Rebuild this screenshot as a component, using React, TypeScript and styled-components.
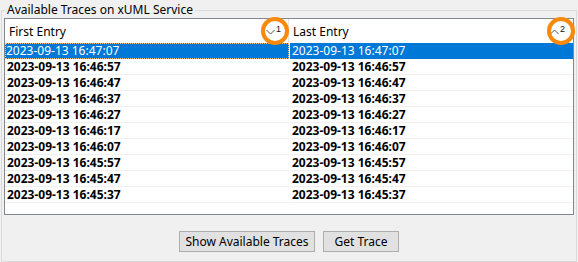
import React from "react";
import styled, { createGlobalStyle } from "styled-components";

const Global = createGlobalStyle`
  html, body { margin: 0; padding: 0; background: #f0f0f0; }
  body { font-family: "Noto Sans", "Liberation Sans", sans-serif; font-size: 12px; color: #000; }
  * { box-sizing: border-box; }
`;

const Page = styled.div`
  width: 578px;
  height: 262px;
  padding: 0 1px 0 1px;
`;

const Group = styled.fieldset`
  margin: 3px 0 0 0;
  height: 259px;
  width: 576px;
  border: 1px solid #dcdcdc;
  padding: 0 2px 0 2px;
  display: flex;
  flex-direction: column;
`;

const Legend = styled.legend`
  padding: 0 2px;
  margin-left: 1px;
  font-size: 12px;
  line-height: 14px;
  color: #000;
`;

const Table = styled.div`
  margin-top: 1px;
  width: 570px;
  height: 197px;
  border: 1px solid #828790;
  background: #fff;
  display: flex;
  flex-direction: column;
`;

const Grid = styled.div`
  display: grid;
  grid-template-columns: 284px 284px;
`;

const HeaderCell = styled.div<{ $last?: boolean }>`
  position: relative;
  height: 24px;
  display: flex;
  align-items: center;
  padding-left: 4px;
  border-right: ${(p) => (p.$last ? "none" : "1px solid #e5e5e5")};
  font-size: 12px;
`;

const SortMark = styled.div<{ $right: number }>`
  position: absolute;
  right: ${(p) => p.$right}px;
  top: 6px;
  display: flex;
  align-items: flex-start;
  gap: 1px;
  z-index: 1;
`;

const SortNum = styled.span`
  font-family: "Liberation Sans", sans-serif;
  font-size: 9px;
  line-height: 9px;
  color: #111;
`;

const Ring = styled.div<{ $right: number }>`
  position: absolute;
  right: ${(p) => p.$right}px;
  top: -2px;
  width: 28px;
  height: 28px;
  border-radius: 50%;
  border: 4px solid #f7890c;
  z-index: 2;
`;

const Cell = styled.div<{ $sel?: boolean; $focus?: boolean; $last?: boolean }>`
  height: 16px;
  line-height: 15px;
  padding-left: ${(p) => (p.$focus ? "1px" : "2px")};
  font-size: 12px;
  margin-left: ${(p) => (p.$last ? "1px" : "0")};
  background: ${(p) => (p.$sel ? "#0078d7" : "#fff")};
  color: ${(p) => (p.$sel ? "#fff" : "#000")};
  font-weight: ${(p) => (p.$sel ? "normal" : "bold")};
  border-bottom: 1px solid ${(p) => (p.$sel ? "#0078d7" : "#f0f0f0")};
  outline: ${(p) => (p.$focus ? "1px dotted #f0c080" : "none")};
  outline-offset: -1px;
  white-space: nowrap;
`;

const Buttons = styled.div`
  display: flex;
  justify-content: center;
  gap: 8px;
  margin-top: 16px;
`;

const Button = styled.button<{ $w: number }>`
  width: ${(p) => p.$w}px;
  height: 21px;
  background: #e1e1e1;
  border: 1px solid #adadad;
  font-family: "Noto Sans", "Liberation Sans", sans-serif;
  font-size: 12px;
  color: #000;
  padding: 0;
  line-height: 17px;
`;

const Chevron = ({ up }: { up?: boolean }) => (
  <svg width="9" height="6" viewBox="0 0 9 6" style={{ marginTop: 4 }}>
    <polyline
      points={up ? "0.5,5 4.5,1 8.5,5" : "0.5,1 4.5,5 8.5,1"}
      fill="none"
      stroke="#555"
      strokeWidth="1"
    />
  </svg>
);

const first = [
  "2023-09-13 16:47:07",
  "2023-09-13 16:46:57",
  "2023-09-13 16:46:47",
  "2023-09-13 16:46:37",
  "2023-09-13 16:46:27",
  "2023-09-13 16:46:17",
  "2023-09-13 16:46:07",
  "2023-09-13 16:45:57",
  "2023-09-13 16:45:47",
  "2023-09-13 16:45:37",
];

export default function App() {
  return (
    <Page>
      <Global />
      <Group>
        <Legend>Available Traces on xUML Service</Legend>
        <Table>
          <Grid>
            <HeaderCell>
              First Entry
              <SortMark $right={7}>
                <Chevron />
                <SortNum>1</SortNum>
              </SortMark>
              <Ring $right={-1} />
            </HeaderCell>
            <HeaderCell $last>
              Last Entry
              <SortMark $right={8}>
                <Chevron up />
                <SortNum>2</SortNum>
              </SortMark>
              <Ring $right={-2} />
            </HeaderCell>
            {first.map((t, i) => (
              <React.Fragment key={t}>
                <Cell $sel={i === 0} $focus={i === 0}>{t}</Cell>
                <Cell $sel={i === 0} $last>{t}</Cell>
              </React.Fragment>
            ))}
          </Grid>
        </Table>
        <Buttons>
          <Button $w={136}>Show Available Traces</Button>
          <Button $w={76}>Get Trace</Button>
        </Buttons>
      </Group>
    </Page>
  );
}
